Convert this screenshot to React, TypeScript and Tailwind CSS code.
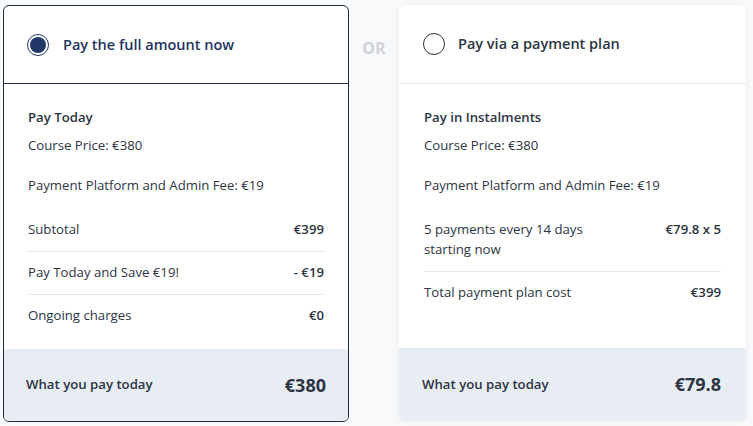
import React from "react";

const font = { fontFamily: '"Open Sans", "Liberation Sans", sans-serif' };

function Radio({ selected }: { selected: boolean }) {
  return selected ? (
    <div className="w-[22px] h-[22px] rounded-full border-[1.5px] border-[#22386b] flex items-center justify-center">
      <div className="w-[16px] h-[16px] rounded-full bg-[#22386b]" />
    </div>
  ) : (
    <div className="w-[22px] h-[22px] rounded-full border-[1.5px] border-[#2d3340]" />
  );
}

export default function App() {
  return (
    <div className="w-[753px] h-[426px] bg-[#f8f9fb] pl-[3px] pt-[5px] flex text-[#2d3544]" style={font}>
      {/* Left card */}
      <div className="w-[346px] h-[417px] rounded-[6px] border border-[#1f2b45] bg-white flex flex-col overflow-hidden">
        <div className="h-[78px] border-b border-[#1f2b45] flex items-center pl-[23px] gap-[14px]">
          <Radio selected />
          <span className="text-[14.5px] font-semibold text-[#1f3461]">Pay the full amount now</span>
        </div>
        <div className="flex-1 px-[24px] pt-[23px] text-[13.2px]">
          <div className="h-[22px] flex items-center font-semibold">Pay Today</div>
          <div className="h-[22px] mt-[6px] flex items-center">Course Price: €380</div>
          <div className="h-[22px] mt-[18px] flex items-center">Payment Platform and Admin Fee: €19</div>
          <div className="h-[43px] mt-[12px] flex items-center justify-between border-b border-[#e3e6ea]">
            <span>Subtotal</span>
            <span className="font-semibold">€399</span>
          </div>
          <div className="h-[43px] flex items-center justify-between border-b border-[#e3e6ea]">
            <span>Pay Today and Save €19!</span>
            <span className="font-semibold">- €19</span>
          </div>
          <div className="h-[42px] flex items-center justify-between">
            <span>Ongoing charges</span>
            <span className="font-semibold">€0</span>
          </div>
        </div>
        <div className="h-[72px] bg-[#e8edf4] flex items-center justify-between pl-[22px] pr-[22px]">
          <span className="text-[13.2px] font-semibold">What you pay today</span>
          <span className="text-[18px] font-bold">€380</span>
        </div>
      </div>

      {/* OR */}
      <div className="w-[50px] flex justify-center pt-[31px]">
        <span className="text-[16px] font-bold text-[#cfd2d6]">OR</span>
      </div>

      {/* Right card */}
      <div className="w-[347px] h-[416px] rounded-[6px] bg-white shadow-[0_0_6px_rgba(0,0,0,0.06)] flex flex-col overflow-hidden">
        <div className="h-[79px] border-b border-[#e6e8eb] flex items-center pl-[24px] gap-[13px]">
          <Radio selected={false} />
          <span className="text-[14.5px] font-semibold text-[#2b3445]">Pay via a payment plan</span>
        </div>
        <div className="flex-1 px-[25px] pt-[23px] text-[13.2px]">
          <div className="h-[22px] flex items-center font-semibold">Pay in Instalments</div>
          <div className="h-[22px] mt-[6px] flex items-center">Course Price: €380</div>
          <div className="h-[22px] mt-[18px] flex items-center">Payment Platform and Admin Fee: €19</div>
          <div className="mt-[12px] pt-[10px] pb-[12px] flex items-start justify-between border-b border-[#e3e6ea] leading-[20px]">
            <span>5 payments every 14 days<br />starting now</span>
            <span className="font-semibold">€79.8 x 5</span>
          </div>
          <div className="h-[42px] flex items-center justify-between">
            <span>Total payment plan cost</span>
            <span className="font-semibold">€399</span>
          </div>
        </div>
        <div className="h-[73px] bg-[#e8edf4] flex items-center justify-between pl-[23px] pr-[25px]">
          <span className="text-[13.2px] font-semibold">What you pay today</span>
          <span className="text-[18px] font-bold">€79.8</span>
        </div>
      </div>
    </div>
  );
}
